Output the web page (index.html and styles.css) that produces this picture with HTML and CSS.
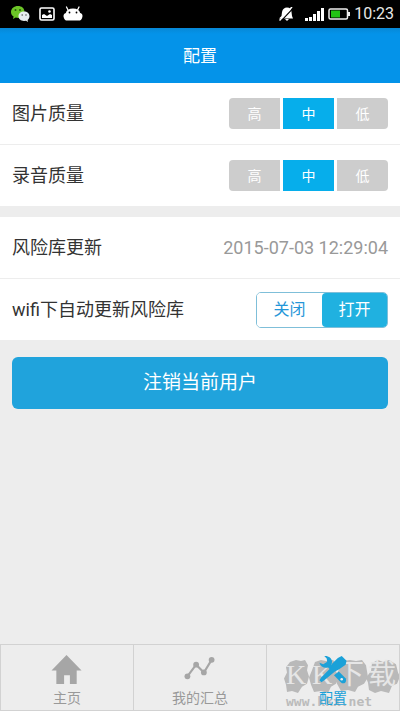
FILE: index.html
```html
<!DOCTYPE html>
<html lang="zh-CN">
<head>
<meta charset="utf-8">
<meta name="viewport" content="width=device-width, initial-scale=1">
<title>配置</title>
<link rel="stylesheet" href="styles.css">
</head>
<body>
<div class="status">
  <div class="status-group">
    <svg width="20" height="18" viewBox="0 0 20 18" aria-hidden="true">
      <path d="M7 1C3 1 0 3.600 0 7c0 2 1 3.500 2.600 4.600L2 14l2.700-1.500C10 14 13.500 11 13.500 7S10.500 1 7 1z" fill="#6cc527"/>
      <circle cx="4.500" cy="5" r="1" fill="#28590d"/><circle cx="9" cy="5" r="1" fill="#28590d"/>
      <path d="M13 6.500c-3.200 0-5.500 2-5.500 4.700s2.300 4.700 5.500 4.700l2-.2 2 1.300-.4-2c1.200-1 1.900-2.300 1.900-3.800 0-2.700-2.300-4.700-5.500-4.700z" fill="#e8eef0"/>
      <circle cx="11.200" cy="10" r=".8" fill="#555"/><circle cx="15" cy="10" r=".8" fill="#555"/>
    </svg>
    <svg width="16" height="14" viewBox="0 0 16 14" aria-hidden="true">
      <rect x="1" y="1" width="14" height="12" rx="1.500" fill="none" stroke="#fff" stroke-width="1.600"/>
      <path d="M3 11V8l2-1 3 2 3-2 2 1v3z" fill="#fff"/><circle cx="10.500" cy="4.500" r="1.300" fill="#fff"/>
    </svg>
    <svg width="20" height="16" viewBox="0 0 20 16" aria-hidden="true">
      <path d="M3.500 1 5 4M16 1l-1.500 3" stroke="#fff" stroke-width="1.300" stroke-linecap="round"/>
      <path d="M10 2.500c4 0 6.500 1.500 7.200 4.500 2.400.5 2.800 3 1.800 5.200-.7 1.800-2 2.600-3.500 2.300H4.500C3 14.800 1.700 14 1 12.200 0 10 .4 7.500 2.800 7 3.500 4 6 2.500 10 2.500z" fill="#fff"/>
      <circle cx="6.500" cy="6.500" r=".9"/><circle cx="13.500" cy="6.500" r=".9"/>
    </svg>
  </div>
  <div class="status-group status-right">
    <svg class="bell" width="14" height="14" viewBox="0 0 14 14" aria-hidden="true">
      <path d="M0 11.500 2.500 9l.5-4C3.500 2 5.500.5 8 .5c3 0 4.500 2 4.500 4.500L13 9l1 2.500z" fill="#fff"/>
      <path d="M6 12h4l-2 2z" fill="#fff"/><path d="M2 14 14 1.500" stroke="#000" stroke-width="1.200"/><path d="M.5 13.500 13 0" stroke="#fff" stroke-width="1.500"/>
    </svg>
    <svg width="19" height="13" viewBox="0 0 19 13" fill="#fff" aria-hidden="true">
      <path d="M0 10h3v3H0zM4 9h3v4H4zM8 6h3v7H8zM12 3h3v10h-3zM16 0h3v13h-3z"/>
    </svg>
    <svg width="22" height="12" viewBox="0 0 22 12" aria-hidden="true">
      <rect x="1" y="1" width="18.500" height="10" rx="1.500" fill="none" stroke="#eee" stroke-width="1.500"/>
      <path d="M20 4h2v4h-2z" fill="#eee"/><path d="M3 2.500h9v7H3z" fill="#21c414"/>
    </svg>
    <time>10:23</time>
  </div>
</div>
<header class="header"><h1>配置</h1></header>
<main>
  <section class="group">
    <div class="row">
      <span>图片质量</span>
      <div class="levels" role="group" aria-label="图片质量">
        <button type="button">高</button><button type="button" class="on">中</button><button type="button">低</button>
      </div>
    </div>
    <div class="row">
      <span>录音质量</span>
      <div class="levels" role="group" aria-label="录音质量">
        <button type="button">高</button><button type="button" class="on">中</button><button type="button">低</button>
      </div>
    </div>
  </section>
  <section class="group">
    <div class="row"><span>风险库更新</span><time class="date">2015-07-03 12:29:04</time></div>
    <div class="row">
      <span>wifi下自动更新风险库</span>
      <div class="switch" role="group" aria-label="wifi下自动更新风险库">
        <button type="button">关闭</button><button type="button" class="on">打开</button>
      </div>
    </div>
  </section>
  <button type="button" class="logout">注销当前用户</button>
</main>
<div class="mark" aria-hidden="true">
  <div class="stamp">
    <svg viewBox="0 0 116 32" preserveAspectRatio="none">
      <path d="m6 2 6-2 5 1 4-1 3 5-1 5 2 6-2 7-5 3-4 6-6-2-5 1-1-7-2-6 3-6-1-5z"/>
      <path d="m31 2 6-2 5 1 7-1 4 5-1 6 3 6-3 6-5 3-3 6-7-2-7 1-3-7-2-7 3-7z"/>
      <path d="m59 1 7-1 6 1 6-1 4 5 1 6 1 6-4 6-6 3-3 5-7-2-7 1-4-7-1-7 3-7z"/>
      <path d="m88 3 6-3 5 2 6-2 7 4 2 8 2 4-3 7-5 2-3 7-8-2-6 2-6-3-1-7-2-5 5-6z"/>
    </svg>
    <span>K</span><span>K</span><span>下</span><span>载</span>
  </div>
  <div class="site">www.kkx.net</div>
</div>
<nav class="tabs">
  <a href="#home">
    <svg width="32" height="32" viewBox="0 0 32 32" fill="#a6a6a6" aria-hidden="true"><path d="M15.500 0 31 16h-5v14h-7v-9h-6v9H5V16H0z"/></svg>
    主页
  </a>
  <a href="#summary">
    <svg width="32" height="32" viewBox="0 0 32 32" fill="#a6a6a6" aria-hidden="true">
      <path d="M3 22 12 10l8 8 8-13" fill="none" stroke="#a6a6a6" stroke-width="2.200"/>
      <circle cx="3" cy="22" r="3"/><circle cx="12" cy="10" r="3"/><circle cx="20" cy="18" r="3"/><circle cx="28" cy="5" r="3"/>
    </svg>
    我的汇总
  </a>
  <a href="#settings" class="current">
    <svg width="32" height="32" viewBox="0 0 32 32" fill="#1ba1d8" aria-hidden="true">
      <path d="M7 1c4-.5 8 2 8 6l-.5 3 3.500 4-3 3-4-4c-4 1-8-1-9-5l4 1.500 4-2.500-.5-3.500z"/>
      <path d="m25 1 5 5-1 4-7 5-4 2L7 26l-3 2-2-2 2-3 10-10 1-4 6-6z"/>
      <path d="m17 21 5-4 7 7c2 4-2 7-5 4z"/><circle cx="25" cy="25" r="1.300" fill="#eee"/>
    </svg>
    配置
  </a>
</nav>
</body>
</html>
```

FILE: styles.css
```css
* { box-sizing: border-box; }
body {
  margin: 0;
  min-height: 100vh;
  position: relative;
  display: flex;
  flex-direction: column;
  background: #ededed;
  color: #333;
  font: 18px/24px Roboto, "Noto Sans CJK SC", sans-serif;
}
button { font: inherit; border: 0; padding: 0; }
svg { display: block; }

.status {
  height: 28px;
  padding: 0 6px 0 11px;
  display: flex;
  justify-content: space-between;
  align-items: center;
  background: #000;
  color: #e8e8e8;
  font-size: 16px;
}
.status-group { display: flex; align-items: center; gap: 8px; }
.status-right { gap: 4px; }
.bell { margin-right: 8px; }

.header {
  height: 55px;
  display: flex;
  align-items: center;
  justify-content: center;
  background: linear-gradient(#0788d6, #0493e9 6px);
  color: #fff;
}
.header h1 { margin: 0; font-size: 17px; font-weight: 400; }

main { flex: 1; }
.group { margin-bottom: 11px; background: #fff; }
.row {
  min-height: 61px;
  padding: 0 12px;
  display: flex;
  align-items: center;
  justify-content: space-between;
}
.row + .row { border-top: 1px solid #ededed; min-height: 62px; }
.date { color: #999; }

.levels { display: flex; gap: 3px; }
.levels button {
  width: 51px;
  height: 31px;
  background: #cdcdcd;
  color: #fff;
  font-size: 14px;
}
.levels button:first-child { border-radius: 4px 0 0 4px; }
.levels button:last-child { border-radius: 0 4px 4px 0; }
.levels .on { background: #06aeeb; }

.switch {
  display: flex;
  border: 1px solid #7fbfd9;
  border-radius: 5px;
}
.switch button {
  width: 65px;
  height: 34px;
  border-radius: 4px;
  background: #fff;
  color: #2496d8;
  font-size: 16px;
}
.switch .on { background: #20b1e0; color: #fff; }

.logout {
  display: block;
  width: calc(100% - 24px);
  height: 52px;
  margin: 17px 12px;
  border-radius: 6px;
  background: #20a3dc;
  color: #fff;
  font-size: 19px;
}

.tabs {
  position: relative;
  display: flex;
  border: 1px solid #d2d2d2;
}
.tabs a {
  flex: 1;
  height: 65px;
  padding-top: 10px;
  display: flex;
  flex-direction: column;
  align-items: center;
  color: #999;
  font-size: 14px;
  text-decoration: none;
}
.tabs a + a { border-left: 1px solid #d2d2d2; }
.tabs .current { color: #1ba1d8; }

.mark {
  position: absolute;
  right: 0;
  bottom: 0;
  width: 116px;
  pointer-events: none;
}
.stamp {
  position: relative;
  height: 33px;
  display: grid;
  grid-template-columns: 24px 28px 28px 36px;
}
.stamp svg {
  position: absolute;
  width: 100%;
  height: 100%;
  fill: #b9b9b9;
}
.stamp span {
  position: relative;
  color: #e6e6e6;
  font: 28px/30px "Liberation Serif", "Noto Sans CJK SC", serif;
  text-align: center;
}
.site {
  padding-left: 2px;
  color: #bbb;
  font: bold 13px/18px "DejaVu Sans Mono", monospace;
}
```
